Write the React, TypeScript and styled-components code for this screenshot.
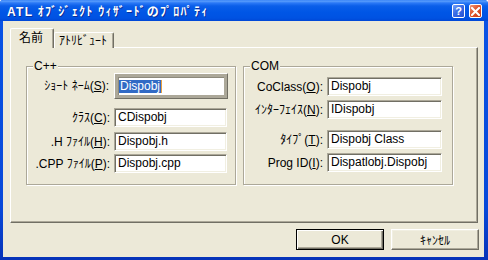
import React from 'react';
import styled, { createGlobalStyle } from 'styled-components';

const GlobalStyle = createGlobalStyle`
    html, body {
        margin: 0;
        padding: 0;
        background: #ffffff;
    }
    body {
        font-family: "Liberation Sans", "Noto Sans CJK JP", sans-serif;
        font-size: 12px;
        color: #000000;
    }
    * {
        box-sizing: border-box;
    }
`;

type Field = {
    pre: string;
    key: string;
    post: string;
    value: string;
    top: number;
};

const cppFields: Field[] = [
    { pre: 'ｸﾗｽ(', key: 'C', post: '):', value: 'CDispobj', top: 9 },
    { pre: '.H ﾌｧｲﾙ(', key: 'H', post: '):', value: 'Dispobj.h', top: 5 },
    { pre: '.CPP ﾌｧｲﾙ(', key: 'P', post: '):', value: 'Dispobj.cpp', top: 3 },
];

const comFields: Field[] = [
    { pre: 'CoClass(', key: 'O', post: '):', value: 'Dispobj', top: 10 },
    { pre: 'ｲﾝﾀｰﾌｪｲｽ(', key: 'N', post: '):', value: 'IDispobj', top: 4 },
    { pre: 'ﾀｲﾌﾟ(', key: 'T', post: '):', value: 'Dispobj Class', top: 11 },
    { pre: 'Prog ID(', key: 'I', post: '):', value: 'Dispatlobj.Dispobj', top: 4 },
];

const Mnemonic = ({ field }: { field: Field }) => (
    <>
        {field.pre}
        <u>{field.key}</u>
        {field.post}
    </>
);

const App = () => {
    return (
        <>
            <GlobalStyle />
            <Window>
                <TitleBar>
                    <Title>ATL ｵﾌﾞｼﾞｪｸﾄ ｳｨｻﾞｰﾄﾞのﾌﾟﾛﾊﾟﾃｨ</Title>
                    <CaptionButton $kind="help">?</CaptionButton>
                    <CaptionButton $kind="close">
                        <svg width="9" height="9" viewBox="0 0 9 9">
                            <path d="M1 1 L8 8 M8 1 L1 8" stroke="#fff" strokeWidth="2" strokeLinecap="square" />
                        </svg>
                    </CaptionButton>
                </TitleBar>
                <Body>
                    <TabRow>
                        <Tab $active>名前</Tab>
                        <Tab>ｱﾄﾘﾋﾞｭｰﾄ</Tab>
                    </TabRow>
                    <Panel>
                        <Group>
                            <GroupCaption>C++</GroupCaption>
                            <Row $top={6}>
                                <Label $width={82}>
                                    ｼｮｰﾄ ﾈｰﾑ(<u>S</u>):
                                </Label>
                                <FocusBox>
                                    <Selected>Dispobj</Selected>
                                    <Caret />
                                </FocusBox>
                            </Row>
                            {cppFields.map((f) => (
                                <Row key={f.key} $top={f.top}>
                                    <Label $width={83}>
                                        <Mnemonic field={f} />
                                    </Label>
                                    <Edit $width={113}>{f.value}</Edit>
                                </Row>
                            ))}
                        </Group>
                        <Group>
                            <GroupCaption>COM</GroupCaption>
                            {comFields.map((f) => (
                                <Row key={f.key} $top={f.top}>
                                    <Label $width={79}>
                                        <Mnemonic field={f} />
                                    </Label>
                                    <Edit $width={115}>{f.value}</Edit>
                                </Row>
                            ))}
                        </Group>
                    </Panel>
                    <ButtonRow>
                        <PushButton $default>OK</PushButton>
                        <PushButton>ｷｬﾝｾﾙ</PushButton>
                    </ButtonRow>
                </Body>
            </Window>
        </>
    );
};

const Window = styled.div`
    width: 488px;
    height: 260px;
    display: flex;
    flex-direction: column;
    background: linear-gradient(to bottom, #0a54e6 0%, #0849d9 80%, #0733b8 100%);
    border-radius: 3px 4px 0 0;
    overflow: hidden;
`;

const TitleBar = styled.div`
    height: 21px;
    flex-shrink: 0;
    display: flex;
    align-items: center;
    padding: 0 6px 0 7px;
    gap: 3px;
    background: linear-gradient(
        to bottom,
        #2c7af5 0px,
        #5da0fc 1px,
        #2a78f6 3px,
        #0a5ee9 6px,
        #0056e6 12px,
        #0052e2 18px,
        #0047d6 21px
    );
`;

const Title = styled.div`
    flex: 1;
    color: #ffffff;
    font-weight: bold;
    font-size: 12px;
    letter-spacing: 1.3px;
    white-space: nowrap;
    text-shadow: 1px 1px 0 #0a2f98;
`;

const CaptionButton = styled.div<{ $kind: 'help' | 'close' }>`
    width: 13px;
    height: 14px;
    margin-top: 1px;
    display: flex;
    align-items: center;
    justify-content: center;
    border: 1px solid #ffffff;
    border-radius: 2px;
    color: #ffffff;
    font-family: "Liberation Sans", sans-serif;
    font-weight: bold;
    font-size: 11px;
    line-height: 1;
    background: ${(p) =>
        p.$kind === 'close'
            ? 'linear-gradient(135deg, #ef9a7c 0%, #e0552d 45%, #c83c17 100%)'
            : 'linear-gradient(135deg, #7aa3f8 0%, #3a6ce6 45%, #2451d2 100%)'};
    & + & {
        margin-left: 1px;
    }
`;

const Body = styled.div`
    flex: 1;
    margin: 0 4px 3px 3px;
    padding: 7px 6px 7px 7px;
    background: #ece9d8;
    display: flex;
    flex-direction: column;
`;

const TabRow = styled.div`
    display: flex;
    align-items: flex-end;
    height: 20px;
    margin-bottom: -1px;
    position: relative;
    z-index: 1;
`;

const Tab = styled.div<{ $active?: boolean }>`
    height: ${(p) => (p.$active ? '20px' : '16px')};
    width: ${(p) => (p.$active ? '44px' : '60px')};
    padding: ${(p) => (p.$active ? '2px 0 0 8px' : '1px 0 0 4px')};
    background: #ece9d8;
    border-top: 1px solid #ffffff;
    border-left: 1px solid #ffffff;
    border-right: 1px solid #716f64;
    border-radius: 2px 2px 0 0;
    box-shadow: inset -1px 0 0 #aca899;
    line-height: 14px;
    white-space: nowrap;
`;

const Panel = styled.div`
    height: 176px;
    display: flex;
    align-items: flex-start;
    gap: 7px;
    padding: 18px 0 0 15px;
    border-top: 1px solid #ffffff;
    border-left: 1px solid #ffffff;
    border-right: 1px solid #716f64;
    border-bottom: 1px solid #716f64;
    box-shadow: inset -1px -1px 0 #aca899;
`;

const Group = styled.div`
    position: relative;
    width: 210px;
    height: 119px;
    display: flex;
    flex-direction: column;
    border: 1px solid #aca899;
    box-shadow: 1px 1px 0 #ffffff, inset 1px 1px 0 #ffffff;
`;

const GroupCaption = styled.div`
    position: absolute;
    top: -8px;
    left: 6px;
    padding: 0 1px;
    background: #ece9d8;
    line-height: 14px;
`;

const Row = styled.div<{ $top: number }>`
    display: flex;
    align-items: center;
    gap: 4px;
    margin-top: ${(p) => p.$top}px;
`;

const Label = styled.div<{ $width: number }>`
    width: ${(p) => p.$width}px;
    text-align: right;
    white-space: nowrap;
    line-height: 14px;
`;

const Edit = styled.div<{ $width: number }>`
    width: ${(p) => p.$width}px;
    height: 19px;
    padding: 1px 0 0 3px;
    background: #ffffff;
    border: 1px solid;
    border-color: #aca899 #ffffff #ffffff #aca899;
    box-shadow: inset 1px 1px 0 #716f64, inset -1px -1px 0 #f1efe2;
    line-height: 15px;
    white-space: nowrap;
    overflow: hidden;
`;

const FocusBox = styled.div`
    width: 114px;
    height: 26px;
    margin-left: 1px;
    display: flex;
    align-items: center;
    padding-left: 4px;
    background: #ffffff;
    border: 1px solid;
    border-color: #ffffff #716f64 #716f64 #ffffff;
    box-shadow: inset 0 0 0 3px #aca899, inset 4px 4px 0 #8d8a7c;
`;

const Selected = styled.span`
    background: #316ac5;
    color: #ffffff;
    line-height: 13px;
    padding: 0 1px;
`;

const Caret = styled.span`
    width: 1px;
    height: 13px;
    background: #e8a040;
`;

const ButtonRow = styled.div`
    display: flex;
    justify-content: flex-end;
    gap: 7px;
    margin-top: 6px;
    margin-right: -1px;
`;

const PushButton = styled.div<{ $default?: boolean }>`
    width: 88px;
    height: 21px;
    display: flex;
    align-items: center;
    justify-content: center;
    background: #ece9d8;
    border: 1px solid;
    border-color: ${(p) => (p.$default ? '#000000' : '#ffffff #716f64 #716f64 #ffffff')};
    box-shadow: ${(p) =>
        p.$default
            ? 'inset 1px 1px 0 #ffffff, inset -1px -1px 0 #716f64, inset -2px -2px 0 #aca899'
            : 'inset -1px -1px 0 #aca899, inset 1px 1px 0 #f1efe2'};
    white-space: nowrap;
`;

export default App;
